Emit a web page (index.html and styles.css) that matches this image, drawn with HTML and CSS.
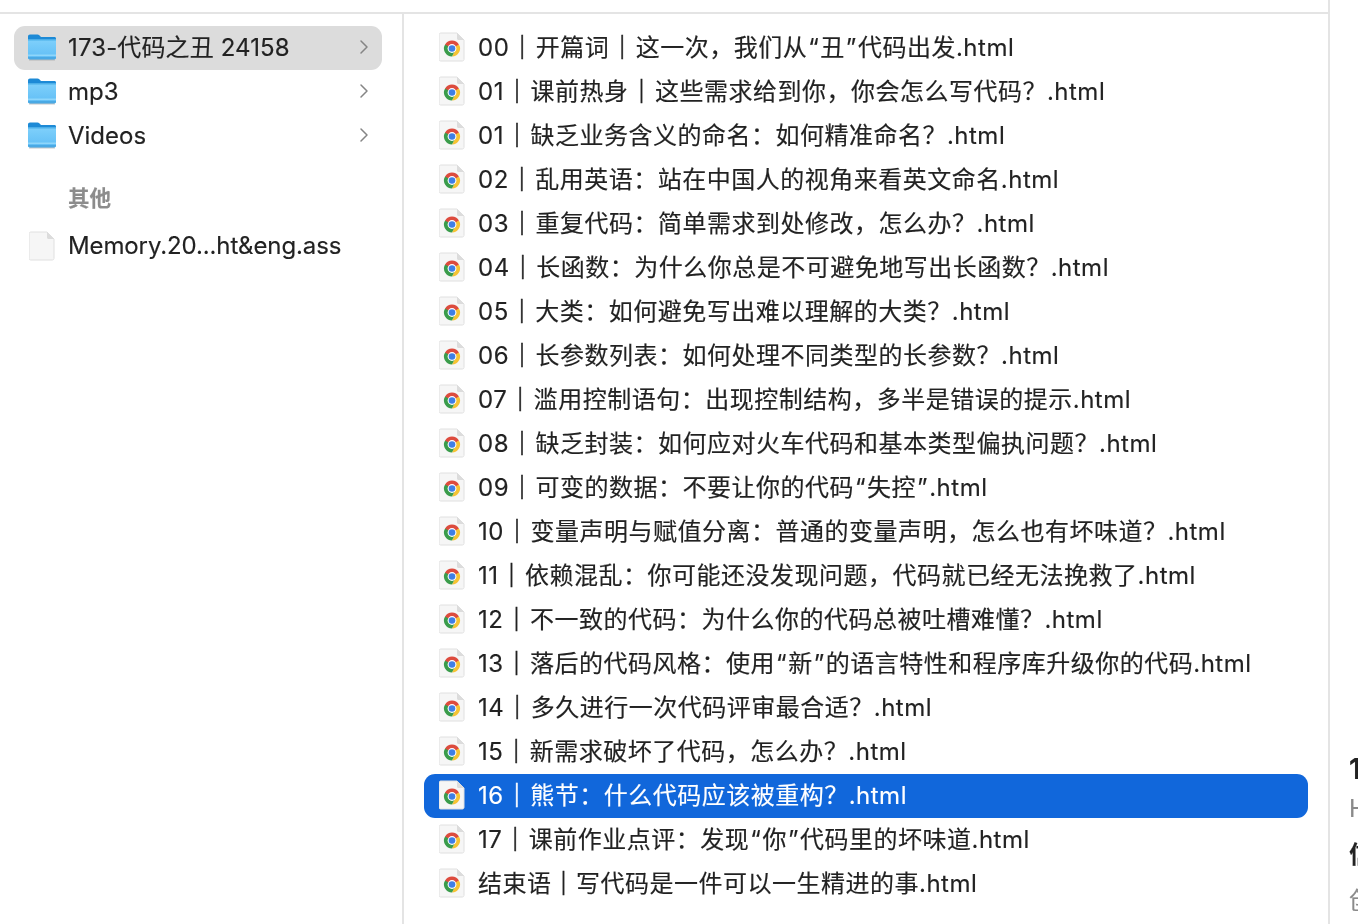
FILE: index.html
```html
<!DOCTYPE html>
<html lang="zh-CN">
<head>
<meta charset="utf-8">
<title>Finder</title>
<link rel="stylesheet" href="styles.css">
</head>
<body>
<svg class="defs" width="0" height="0" aria-hidden="true">
  <defs>
    <linearGradient id="fold" x1="0" y1="0" x2="0" y2="1">
      <stop offset="0" stop-color="#7fd0fb"/>
      <stop offset="1" stop-color="#5fbdf5"/>
    </linearGradient>
    <symbol id="folder" viewBox="1 1 28 27">
      <path d="M1 3.500C1 2.400 1.800 1.500 3 1.500h7.500c.8 0 1.300.3 1.800.8l1.700 1.700H27.500c.9 0 1.500.7 1.500 1.500V8H1z" fill="#1d8ad6"/>
      <path d="M1 6.500h28V24.500c0 1.200-.8 2-2 2H3c-1.200 0-2-.8-2-2z" fill="url(#fold)"/>
      <path d="M1 6.500h28v1H1z" fill="#49aee9"/>
      <path d="M1 21.500h28v1.500H1z" fill="#8fd6fb"/>
      <path d="M1 24h28v.5c0 1.200-.8 2-2 2H3c-1.200 0-2-.8-2-2z" fill="#4aa9e4"/>
      <path d="M2 27h26" stroke="#9a9a9a" stroke-opacity=".55" stroke-width="1"/>
    </symbol>
    <symbol id="doc" viewBox="0 0 26 30">
      <path d="M1.500 1h16.500l7 7v19.500c0 .8-.7 1.500-1.500 1.500h-22c-.8 0-1.500-.7-1.500-1.500V2.500C.5 1.700.7 1 1.500 1z" fill="#f6f6f6" stroke="#e0e0e0"/>
      <path d="M18 1v5.500c0 .9.600 1.500 1.500 1.500H25z" fill="#dcdcdc"/>
    </symbol>
    <symbol id="chrome" viewBox="0 0 26 30">
      <use href="#doc"/>
      <g transform="translate(13 16.500)">
        <path d="M0-8A8 8 0 0 1 6.930-4L3.460 0H0-4l-2.930 0L-6.930-4A8 8 0 0 1 0-8z" fill="#dd4b3e"/>
        <path d="M6.930-4A8 8 0 0 1 0 8L3.200 1.800 3.460-2z" fill="#f6c334"/>
        <path d="M-6.930-4A8 8 0 0 0 0 8L3.200 1.800-3.460-2z" fill="#3a9c4b"/>
        <circle r="4.400" fill="#fff"/>
        <circle r="3.300" fill="#3f7fe6"/>
      </g>
    </symbol>
  </defs>
</svg>
<main class="window">
  <section class="col col-side">
    <ul class="list">
      <li class="row row-active"><svg class="ico-folder"><use href="#folder"/></svg><span class="name">173-代码之丑 24158</span><svg class="chev" viewBox="0 0 10 16"><path d="M2 2l6 6-6 6"/></svg></li>
      <li class="row"><svg class="ico-folder"><use href="#folder"/></svg><span class="name">mp3</span><svg class="chev" viewBox="0 0 10 16"><path d="M2 2l6 6-6 6"/></svg></li>
      <li class="row"><svg class="ico-folder"><use href="#folder"/></svg><span class="name">Videos</span><svg class="chev" viewBox="0 0 10 16"><path d="M2 2l6 6-6 6"/></svg></li>
    </ul>
    <h2 class="group">其他</h2>
    <ul class="list list-tight">
      <li class="row"><svg class="ico-plain"><use href="#doc"/></svg><span class="name name-tight">Memory.20...ht&amp;eng.ass</span></li>
    </ul>
  </section>
  <section class="col col-files">
    <ul class="list">
      <li class="file"><svg class="ico-file"><use href="#chrome"/></svg><span>00<b class="sep">｜</b>开篇词<b class="sep">｜</b>这一次，我们从<i class="q">“</i>丑<i class="q">”</i>代码出发.html</span></li>
      <li class="file"><svg class="ico-file"><use href="#chrome"/></svg><span>01<b class="sep">｜</b>课前热身<b class="sep">｜</b>这些需求给到你，你会怎么写代码？.html</span></li>
      <li class="file"><svg class="ico-file"><use href="#chrome"/></svg><span>01<b class="sep">｜</b>缺乏业务含义的命名：如何精准命名？.html</span></li>
      <li class="file"><svg class="ico-file"><use href="#chrome"/></svg><span>02<b class="sep">｜</b>乱用英语：站在中国人的视角来看英文命名.html</span></li>
      <li class="file"><svg class="ico-file"><use href="#chrome"/></svg><span>03<b class="sep">｜</b>重复代码：简单需求到处修改，怎么办？.html</span></li>
      <li class="file"><svg class="ico-file"><use href="#chrome"/></svg><span>04<b class="sep">｜</b>长函数：为什么你总是不可避免地写出长函数？.html</span></li>
      <li class="file"><svg class="ico-file"><use href="#chrome"/></svg><span>05<b class="sep">｜</b>大类：如何避免写出难以理解的大类？.html</span></li>
      <li class="file"><svg class="ico-file"><use href="#chrome"/></svg><span>06<b class="sep">｜</b>长参数列表：如何处理不同类型的长参数？.html</span></li>
      <li class="file"><svg class="ico-file"><use href="#chrome"/></svg><span>07<b class="sep">｜</b>滥用控制语句：出现控制结构，多半是错误的提示.html</span></li>
      <li class="file"><svg class="ico-file"><use href="#chrome"/></svg><span>08<b class="sep">｜</b>缺乏封装：如何应对火车代码和基本类型偏执问题？.html</span></li>
      <li class="file"><svg class="ico-file"><use href="#chrome"/></svg><span>09<b class="sep">｜</b>可变的数据：不要让你的代码<i class="q">“</i>失控<i class="q">”</i>.html</span></li>
      <li class="file"><svg class="ico-file"><use href="#chrome"/></svg><span>10<b class="sep">｜</b>变量声明与赋值分离：普通的变量声明，怎么也有坏味道？.html</span></li>
      <li class="file"><svg class="ico-file"><use href="#chrome"/></svg><span>11<b class="sep">｜</b>依赖混乱：你可能还没发现问题，代码就已经无法挽救了.html</span></li>
      <li class="file"><svg class="ico-file"><use href="#chrome"/></svg><span>12<b class="sep">｜</b>不一致的代码：为什么你的代码总被吐槽难懂？.html</span></li>
      <li class="file"><svg class="ico-file"><use href="#chrome"/></svg><span>13<b class="sep">｜</b>落后的代码风格：使用<i class="q">“</i>新<i class="q">”</i>的语言特性和程序库升级你的代码.html</span></li>
      <li class="file"><svg class="ico-file"><use href="#chrome"/></svg><span>14<b class="sep">｜</b>多久进行一次代码评审最合适？.html</span></li>
      <li class="file"><svg class="ico-file"><use href="#chrome"/></svg><span>15<b class="sep">｜</b>新需求破坏了代码，怎么办？.html</span></li>
      <li class="file file-selected"><svg class="ico-file"><use href="#chrome"/></svg><span>16<b class="sep">｜</b>熊节：什么代码应该被重构？.html</span></li>
      <li class="file"><svg class="ico-file"><use href="#chrome"/></svg><span>17<b class="sep">｜</b>课前作业点评：发现<i class="q">“</i>你<i class="q">”</i>代码里的坏味道.html</span></li>
      <li class="file"><svg class="ico-file"><use href="#chrome"/></svg><span>结束语<b class="sep">｜</b>写代码是一件可以一生精进的事.html</span></li>
    </ul>
  </section>
  <aside class="col col-preview">
    <p class="pv-title">16｜熊节：什么代码应该被重构？.html</p>
    <p class="pv-kind">HTML文本 - 2 MB</p>
    <p class="pv-head">信息</p>
    <p class="pv-kind">创建时间</p>
  </aside>
</main>
</body>
</html>
```
FILE: styles.css
```css
* { box-sizing: border-box; }
html, body { margin: 0; padding: 0; height: 100%; overflow: hidden; background: #fff; }
body {
  font-family: Inter, "Noto Sans CJK SC", "Liberation Sans", sans-serif;
  font-size: 24px;
  color: #222;
  -webkit-text-stroke: .15px currentColor;
}
.defs { position: absolute; }
.window {
  display: grid;
  grid-template-columns: 402px 926px 1fr;
  height: 924px;
}
.col {
  margin-top: 12px;
  border-top: 2px solid #e4e4e4;
  padding-top: 12px;
  min-width: 0;
  will-change: transform;
}
.col-side { padding-left: 14px; padding-right: 20px; }
.col-files { border-left: 2px solid #e4e4e4; padding-left: 20px; padding-right: 20px; }
.col-preview {
  margin-top: 0;
  border-top: 0;
  padding-top: 0;
  border-left: 2px solid #e4e4e4;
  padding-left: 19px;
  overflow: hidden;
  white-space: nowrap;
}
.list { list-style: none; margin: 0; padding: 0; }
.row {
  display: flex;
  align-items: center;
  height: 44px;
  padding: 0 14px;
  border-radius: 11px;
}
.row-active { background: #dcdcdc; }
.row-active .name { letter-spacing: .12px; }
.ico-folder { width: 28px; height: 27px; flex: none; margin: -2px 12px 0 0; }
.ico-plain { width: 26px; height: 30px; flex: none; margin: 0 13px 0 1px; }
.name { flex: 1; white-space: nowrap; line-height: 44px; }
.name-tight { letter-spacing: -.12px; }
.chev {
  width: 10px;
  height: 16px;
  flex: none;
  margin: -2px -1px 0 0;
  fill: none;
  stroke: #858585;
  stroke-width: 1.500;
  stroke-linecap: round;
  stroke-linejoin: round;
}
.group {
  margin: 21px 0 7px;
  height: 38px;
  line-height: 38px;
  padding-left: 54px;
  font-size: 21.500px;
  font-weight: 700;
  color: #8c8c8c;
}
.file {
  display: flex;
  align-items: center;
  height: 44px;
  padding-left: 14px;
  border-radius: 11px;
  white-space: nowrap;
  line-height: 44px;
  letter-spacing: .5px;
}
.sep { font-family: "Noto Sans CJK SC", sans-serif; font-weight: 900; line-height: 0; margin: 0 1px; -webkit-text-stroke: .5px currentColor; }
.file:last-child .sep { margin: 0; }
.q { font-style: normal; margin: 0 1px; }
.ico-file { width: 26px; height: 30px; flex: none; margin: -3px 13px 0 1px; }
.file-selected { background: #1167db; color: #fff; }
.col-preview p { margin: 0; }
.pv-title { font-size: 28px; font-weight: 700; margin-top: 752px !important; height: 42px; line-height: 34px; }
.pv-kind { font-size: 24px; color: #8a8a8a; height: 46px; line-height: 30px; }
.pv-head { font-size: 24px; font-weight: 700; height: 46px; line-height: 30px; }
```
